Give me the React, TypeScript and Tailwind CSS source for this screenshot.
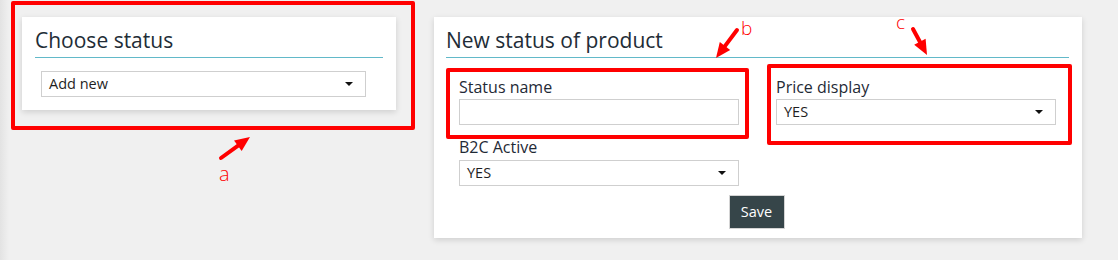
import React from "react";

function Caret() {
  return (
    <svg width="8" height="4" viewBox="0 0 8 4" className="block">
      <polygon points="0,0 8,0 4,4" fill="#111" />
    </svg>
  );
}

function SelectBox({ value, w = "w-[280px]" }: { value: string; w?: string }) {
  return (
    <div className={`${w} h-[26px] border border-[#cfcfcf] bg-white flex items-center justify-between pl-[7px] pr-[12px] text-[14.5px] text-[#1f1f1f]`}>
      <span className="leading-[24px]">{value}</span>
      <Caret />
    </div>
  );
}

function Arrow({ x1, y1, x2, y2 }: { x1: number; y1: number; x2: number; y2: number }) {
  const dx = x2 - x1;
  const dy = y2 - y1;
  const len = Math.sqrt(dx * dx + dy * dy);
  const ux = dx / len;
  const uy = dy / len;
  const hl = 15;
  const hw = 6.5;
  const bx = x2 - ux * hl;
  const by = y2 - uy * hl;
  const px = -uy;
  const py = ux;
  const pts = `${x2},${y2} ${bx + px * hw},${by + py * hw} ${bx - px * hw},${by - py * hw}`;
  return (
    <g>
      <line x1={x1} y1={y1} x2={bx + ux * 2} y2={by + uy * 2} stroke="#ff0000" strokeWidth="4" strokeLinecap="round" />
      <polygon points={pts} fill="#ff0000" />
    </g>
  );
}

export default function App() {
  return (
    <div className="relative w-[1118px] h-[260px] overflow-hidden bg-[linear-gradient(to_right,#e3e3e3,#f0f0f0_9px)] font-['Open_Sans',sans-serif] text-[#1f2a36]">
      <div className="flex items-start pt-[17px] pl-[22px] gap-[38px]">
        {/* Card 1 */}
        <div className="w-[374px] h-[93px] bg-white shadow-[0_2px_6px_rgba(0,0,0,0.14)] px-[13px] pt-[9px]">
          <div className="text-[21px] leading-[28px] text-[#222c36]">Choose status</div>
          <div className="mt-[3px] h-px bg-[#62b9c9]" />
          <div className="mt-[13px] ml-[6px]">
            <SelectBox value="Add new" w="w-[325px]" />
          </div>
        </div>

        {/* Card 2 */}
        <div className="w-[648px] h-[221px] bg-white shadow-[0_2px_6px_rgba(0,0,0,0.14)] pl-[12px] pr-[13px] pt-[9px]">
          <div className="text-[21px] leading-[28px] text-[#222c36]">New status of product</div>
          <div className="mt-[3px] h-px bg-[#62b9c9]" />
          <div className="flex gap-[37px] pl-[13px] pt-[19px]">
            <div className="w-[280px]">
              <div className="text-[16px] leading-[21px] mb-[1px]">Status name</div>
              <div className="w-[280px] h-[26px] border border-[#cfcfcf] bg-white" />
              <div className="text-[16px] leading-[21px] mt-[12px] mb-[2px]">B2C Active</div>
              <SelectBox value="YES" />
            </div>
            <div className="w-[280px]">
              <div className="text-[16px] leading-[21px] mb-[1px]">Price display</div>
              <SelectBox value="YES" />
            </div>
          </div>
          <div className="flex justify-center mt-[9px] pr-[2px]">
            <button className="w-[56px] h-[34px] bg-[#364549] border border-[#d4d4d4] text-white text-[14.5px] leading-[32px]">
              Save
            </button>
          </div>
        </div>
      </div>

      {/* Annotation boxes */}
      <div className="absolute left-[11px] top-[1px] w-[404px] h-[129px] border-[4px] border-[#ff0000] rounded-[2px]" />
      <div className="absolute left-[446px] top-[68px] w-[303px] h-[71px] border-[4px] border-[#ff0000] rounded-[2px]" />
      <div className="absolute left-[767px] top-[64px] w-[305px] h-[81px] border-[4px] border-[#ff0000] rounded-[2px]" />

      {/* Arrows */}
      <svg className="absolute left-0 top-0" width="1118" height="260" viewBox="0 0 1118 260">
        <Arrow x1={221} y1={158} x2={250} y2={137} />
        <Arrow x1={737} y1={30} x2={716} y2={58} />
        <Arrow x1={913} y1={29} x2={927} y2={55} />
      </svg>

      {/* Labels */}
      <div className="absolute left-[219px] top-[161px] text-[20px] leading-[26px] font-light text-[#ff0000]">a</div>
      <div className="absolute left-[741px] top-[16px] text-[19px] leading-[24px] font-light text-[#ff0000]">b</div>
      <div className="absolute left-[896px] top-[10px] text-[19px] leading-[24px] font-light text-[#ff0000]">c</div>
    </div>
  );
}
